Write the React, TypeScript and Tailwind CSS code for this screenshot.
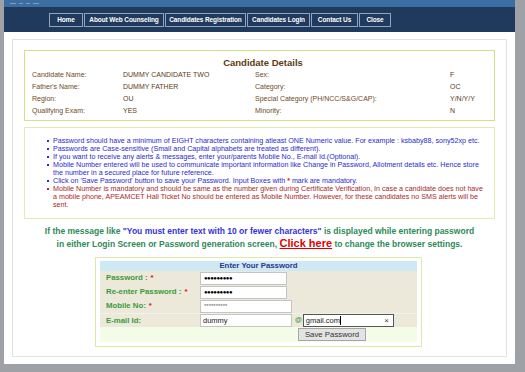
import React from "react";

const navItems = [
  { label: "Home", w: "w-[34px]" },
  { label: "About Web Counseling", w: "w-[80px]" },
  { label: "Candidates Registration", w: "w-[81px]" },
  { label: "Candidates Login", w: "w-[63px]" },
  { label: "Contact Us", w: "w-[47px]" },
  { label: "Close", w: "w-[32px]" },
];

const details = [
  ["Candidate Name:", "DUMMY CANDIDATE TWO", "Sex:", "F"],
  ["Father's Name:", "DUMMY FATHER", "Category:", "OC"],
  ["Region:", "OU", "Special Category (PH/NCC/S&G/CAP):", "Y/N/Y/Y"],
  ["Qualifying Exam:", "YES", "Minority:", "N"],
];

function Star() {
  return <span className="text-[#e01010] font-bold ml-[3px]">*</span>;
}

function Bullet({ red, children }: { red?: boolean; children: React.ReactNode }) {
  return (
    <li className={`flex ${red ? "text-[#a52a2a]" : "text-[#2a2ad0]"}`}>
      <span className={`mt-[3px] mr-[4px] h-[2px] w-[2px] shrink-0 ${red ? "bg-[#a52a2a]" : "bg-[#2a2ad0]"}`} />
      <span>{children}</span>
    </li>
  );
}

export default function App() {
  const sans = { fontFamily: '"Liberation Sans", Arial, sans-serif' };
  return (
    <div className="w-[525px] h-[372px] bg-[#9ea1a5] overflow-hidden" style={sans}>
      <div className="ml-[4px] w-[511px] h-[364px] bg-white flex flex-col">
        {/* window strip */}
        <div className="h-[7px] bg-[#3c6da3] flex items-center gap-[3px] pl-[6px]">
          <span className="h-[1px] w-[6px] bg-[#7f9ec4]" />
          <span className="h-[1px] w-[4px] bg-[#7f9ec4]" />
          <span className="h-[1px] w-[4px] bg-[#7f9ec4]" />
          <span className="h-[1px] w-[6px] bg-[#7f9ec4]" />
        </div>
        {/* nav */}
        <div className="h-[25px] bg-[#1f3a5d] flex items-center pl-[45px] gap-[1px]">
          {navItems.map((n) => (
            <div
              key={n.label}
              className={`${n.w} h-[14px] border border-[#8ea4c0] flex items-center justify-center text-white text-[6.5px] font-bold whitespace-nowrap tracking-[-0.1px]`}
            >
              {n.label}
            </div>
          ))}
        </div>

        {/* panel */}
        <div className="mx-[8px] mt-[7px] h-[318px] border border-[#e2e2e2] px-[11px] pt-[10px]">
          {/* candidate details */}
          <div className="border border-[#d2e08c] pt-[6px] pb-[3px] pl-[7px]">
            <div className="text-center text-[9.5px] font-bold text-[#5e3a14] leading-[12px]">Candidate Details</div>
            <div className="grid grid-cols-[91px_132px_195px_auto] text-[7px] text-[#6e4a26] leading-[12px]">
              {details.map((r) => (
                <React.Fragment key={r[0]}>
                  <span>{r[0]}</span>
                  <span className="text-[#5e3a18]">{r[1]}</span>
                  <span>{r[2]}</span>
                  <span className="text-[#5e3a18]">{r[3]}</span>
                </React.Fragment>
              ))}
            </div>
          </div>

          {/* info */}
          <div className="mt-[6px] border border-[#e2eab8] pt-[9px] pb-[9px] pl-[22px] h-[92px]">
            <ul className="text-[7.15px] leading-[8px] whitespace-nowrap">
              <Bullet>Password should have a minimum of EIGHT characters containing atleast ONE Numeric value. For example : ksbaby88, sony52xp etc.</Bullet>
              <Bullet>Passwords are Case-sensitive (Small and Capital alphabets are treated as different).</Bullet>
              <Bullet>If you want to receive any alerts &amp; messages, enter your/parents Mobile No., E-mail Id.(Optional).</Bullet>
              <Bullet>
                Mobile Number entered will be used to communicate important information like Change in Password, Allotment details etc. Hence store
                <br />
                the number in a secured place for future reference.
              </Bullet>
              <Bullet>
                Click on 'Save Password' button to save your Password. Input Boxes with <span className="text-[#e01010] font-bold">*</span> mark are mandatory.
              </Bullet>
              <Bullet red>
                Mobile Number is mandatory and should be same as the number given during Certificate Verification, In case a candidate does not have
                <br />
                a mobile phone, APEAMCET Hall Ticket No should be entered as Mobile Number. However, for these candidates no SMS alerts will be
                <br />
                sent.
              </Bullet>
            </ul>
          </div>

          {/* message */}
          <div className="mt-[6px] text-center text-[8.5px] font-bold text-[#2f8a58] leading-[12px] whitespace-nowrap">
            <div>
              If the message like <span className="text-[#3333dd]">"You must enter text with 10 or fewer characters"</span> is displayed while entering password
            </div>
            <div>
              in either Login Screen or Password generation screen,{" "}
              <span className="text-[#e00000] underline text-[11px]">Click here</span> to change the browser settings.
            </div>
          </div>

          {/* password form */}
          <div className="mt-[7px] w-[327px] border border-[#dfe8a8] px-[4px] pt-[3px] pb-[4px] ml-[71px]">
            <div className="h-[10px] bg-[#cce9f4] text-center text-[7.8px] font-bold text-[#2a3590] leading-[10px]">Enter Your Password</div>
            <div className="bg-[#ece9da] text-[7.8px] text-[#3a9a3a] font-bold">
              {[
                { label: "Password :", val: "●●●●●●●●●", w: "w-[87px]", dots: true },
                { label: "Re-enter Password :", val: "●●●●●●●●●", w: "w-[87px]", dots: true },
                { label: "Mobile No:", val: "**********", w: "w-[92px]", dots: false },
              ].map((r) => (
                <div key={r.label} className="h-[14px] flex items-center">
                  <span className="w-[100px] pl-[6px] flex">
                    {r.label}
                    <Star />
                  </span>
                  <div
                    className={`${r.w} h-[13px] bg-white border border-[#c4c4c4] flex items-center pl-[3px] font-normal ${r.dots ? "text-black text-[6px] tracking-[-0.5px]" : "text-[#666] text-[6px]"}`}
                  >
                    {r.val}
                  </div>
                </div>
              ))}
              <div className="h-[14px] flex items-center border-t border-[#f4f2e8]">
                <span className="w-[100px] pl-[6px]">E-mail Id:</span>
                <div className="w-[92px] h-[13px] bg-white border border-[#c4c4c4] flex items-center pl-[2px] text-[7.5px] text-[#222] font-normal">
                  dummy
                </div>
                <span className="ml-[3px] text-[7px] text-[#3a9a3a]">@</span>
                <div className="ml-[1px] w-[91px] h-[13px] bg-white border border-[#555] flex items-center pl-[2px] pr-[4px] text-[7.5px] text-[#222] font-normal">
                  <span>gmail.com</span>
                  <span className="h-[9px] w-[1px] bg-black" />
                  <span className="ml-auto text-[8px] text-[#333]">×</span>
                </div>
              </div>
            </div>
            <div className="h-[15px] bg-[#f3fce6] flex items-center pl-[198px]">
              <div className="w-[68px] h-[13px] bg-[#e3e3e3] border border-[#a6a6a6] text-[7.8px] text-[#333] flex items-center justify-center">
                Save Password
              </div>
            </div>
          </div>
        </div>
      </div>
    </div>
  );
}
